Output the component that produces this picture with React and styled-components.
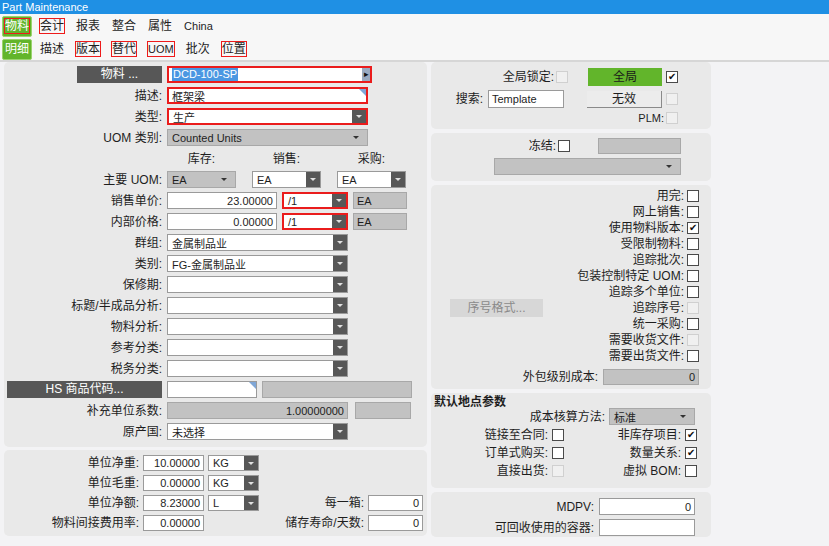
import React from "react";
import styled, { createGlobalStyle } from "styled-components";

const FONT = `"Liberation Sans", "Noto Sans CJK SC", sans-serif`;

const GlobalStyle = createGlobalStyle`
  * { box-sizing: border-box; }
  html, body { margin: 0; padding: 0; background: #f3f3f5; }
  body { font-family: ${FONT}; font-size: 12px; color: #1e1e1e; }
`;

function Select({ value, w, red, gray, flat }) {
  return (
    <SelectBox $w={w} $red={red} $gray={gray}>
      <SelectValue>{value}</SelectValue>
      {flat ? <FlatCaret /> : <DropButton><Caret /></DropButton>}
    </SelectBox>
  );
}

function Check({ checked, disabled }) {
  return <CheckBox $disabled={disabled}>{checked ? "✔" : ""}</CheckBox>;
}

function FormRow({ label, children }) {
  return (
    <Row>
      {typeof label === "string" ? <Label>{label}</Label> : label}
      <Fields>{children}</Fields>
    </Row>
  );
}

const checkList = [
  ["用完:", false, false],
  ["网上销售:", false, false],
  ["使用物料版本:", true, false],
  ["受限制物料:", false, false],
  ["追踪批次:", false, false],
  ["包装控制特定 UOM:", false, false],
  ["追踪多个单位:", false, false],
  ["追踪序号:", false, true],
  ["统一采购:", false, false],
  ["需要收货文件:", false, true],
  ["需要出货文件:", false, false],
];

const emptySelects = ["保修期:", "标题/半成品分析:", "物料分析:", "参考分类:", "税务分类:"];

export default function App() {
  return (
    <Window>
      <GlobalStyle />
      <TitleBar>Part Maintenance</TitleBar>
      <TabBar>
        <Tab $active><TabText $marked>物料</TabText></Tab>
        <Tab><TabText $marked>会计</TabText></Tab>
        <Tab><TabText>报表</TabText></Tab>
        <Tab><TabText>整合</TabText></Tab>
        <Tab><TabText>属性</TabText></Tab>
        <Tab><TabText $latin>China</TabText></Tab>
      </TabBar>
      <TabBar $sub>
        <Tab $active><TabText>明细</TabText></Tab>
        <Tab><TabText>描述</TabText></Tab>
        <Tab><TabText $marked>版本</TabText></Tab>
        <Tab><TabText $marked>替代</TabText></Tab>
        <Tab><TabText $marked $latin>UOM</TabText></Tab>
        <Tab><TabText>批次</TabText></Tab>
        <Tab><TabText $marked>位置</TabText></Tab>
      </TabBar>

      <Body>
        <Column $w={423}>
          <MainPanel>
            <FormRow label={<LinkButton $w={85}>物料 ...</LinkButton>}>
              <TextBox $w={205} $red>
                <Selected>DCD-100-SP</Selected>
                <SideArrow>▸</SideArrow>
              </TextBox>
            </FormRow>
            <FormRow label="描述:">
              <TextBox $w={201} $red>框架梁<Corner /></TextBox>
            </FormRow>
            <FormRow label="类型:">
              <Select w={201} red value="生产" />
            </FormRow>
            <FormRow label="UOM 类别:">
              <Select w={201} gray flat value="Counted Units" />
            </FormRow>
            <FormRow label="">
              <UomGrid>
                <ColHead>库存:</ColHead>
                <ColHead>销售:</ColHead>
                <ColHead>采购:</ColHead>
              </UomGrid>
            </FormRow>
            <FormRow label="主要 UOM:">
              <UomGrid>
                <Select w={69} gray flat value="EA" />
                <Select w={69} value="EA" />
                <Select w={69} value="EA" />
              </UomGrid>
            </FormRow>
            <FormRow label="销售单价:">
              <TextBox $w={110} $right>23.00000</TextBox>
              <Select w={66} red value="/1" />
              <TextBox $w={54} $gray>EA</TextBox>
            </FormRow>
            <FormRow label="内部价格:">
              <TextBox $w={110} $right>0.00000</TextBox>
              <Select w={66} red value="/1" />
              <TextBox $w={54} $gray>EA</TextBox>
            </FormRow>
            <FormRow label="群组:">
              <Select w={181} value="金属制品业" />
            </FormRow>
            <FormRow label="类别:">
              <Select w={181} value="FG-金属制品业" />
            </FormRow>
            {emptySelects.map((l) => (
              <FormRow key={l} label={l}>
                <Select w={181} value="" />
              </FormRow>
            ))}
            <FormRow label={<LinkButton $w={155}>HS 商品代码...</LinkButton>}>
              <TextBox $w={90}><Corner /></TextBox>
              <TextBox $w={150} $gray />
            </FormRow>
            <FormRow label="补充单位系数:">
              <TextBox $w={181} $gray $right>1.00000000</TextBox>
              <TextBox $w={56} $gray $ml={2} />
            </FormRow>
            <FormRow label="原产国:">
              <Select w={181} value="未选择" />
            </FormRow>
          </MainPanel>

          <WeightPanel>
            <Label>单位净重:</Label>
            <TextBox $w={61} $right>10.00000</TextBox>
            <Select w={51} value="KG" />
            <span />
            <span />
            <Label>单位毛重:</Label>
            <TextBox $w={61} $right>0.00000</TextBox>
            <Select w={51} value="KG" />
            <span />
            <span />
            <Label>单位净额:</Label>
            <TextBox $w={61} $right>8.23000</TextBox>
            <Select w={51} value="L" />
            <Label>每一箱:</Label>
            <TextBox $w={55} $right>0</TextBox>
            <Label>物料间接费用率:</Label>
            <TextBox $w={61} $right>0.00000</TextBox>
            <span />
            <Label>储存寿命/天数:</Label>
            <TextBox $w={55} $right>0</TextBox>
          </WeightPanel>
        </Column>

        <Column $w={280}>
          <Panel $h={67}>
            <FlagRow $top={6}>
              <Label>全局锁定:</Label>
              <Check disabled />
              <GreenButton>全局</GreenButton>
              <Check checked />
            </FlagRow>
            <FlagRow $top={4}>
              <Label>搜索:</Label>
              <TextBox $w={76} $h={18} $ml={3}>Template</TextBox>
              <PlainButton>无效</PlainButton>
              <Check disabled />
            </FlagRow>
            <FlagRow $top={4} $h={12}>
              <Label $latin>PLM:</Label>
              <Check disabled />
            </FlagRow>
          </Panel>

          <Panel $h={48}>
            <FreezeRow>
              <Label>冻结:</Label>
              <Check />
              <TextBox $w={83} $h={16} $gray $ml={26} />
            </FreezeRow>
            <FreezeRow $top={4}>
              <Select w={187} gray flat value="" />
            </FreezeRow>
          </Panel>

          <Panel $h={204}>
            <CheckGrid>
              <SerialButton>序号格式...</SerialButton>
              {checkList.map(([l, c, d]) => (
                <CheckItem key={l}>
                  <Label>{l}</Label>
                  <Check checked={c} disabled={d} />
                </CheckItem>
              ))}
            </CheckGrid>
            <CostRow>
              <Label>外包级别成本:</Label>
              <TextBox $w={96} $h={16} $gray $right>0</TextBox>
            </CostRow>
          </Panel>

          <Panel $h={95}>
            <SectionTitle>默认地点参数</SectionTitle>
            <MethodRow>
              <Label>成本核算方法:</Label>
              <Select w={86} gray flat value="标准" />
            </MethodRow>
            <SiteGrid>
              <Label>链接至合同:</Label>
              <Check />
              <Label>非库存项目:</Label>
              <Check checked />
              <Label>订单式购买:</Label>
              <Check />
              <Label>数量关系:</Label>
              <Check checked />
              <Label>直接出货:</Label>
              <Check disabled />
              <Label>虚拟 BOM:</Label>
              <Check />
            </SiteGrid>
          </Panel>

          <Panel $h={45}>
            <MdpvRow $top={6}>
              <Label>MDPV:</Label>
              <TextBox $w={96} $right>0</TextBox>
            </MdpvRow>
            <MdpvRow $top={4}>
              <Label>可回收使用的容器:</Label>
              <TextBox $w={96} $h={17} />
            </MdpvRow>
          </Panel>
        </Column>
      </Body>
    </Window>
  );
}

const Window = styled.div`
  width: 829px;
  height: 546px;
  overflow: hidden;
  background: #f3f3f5;
`;

const TitleBar = styled.div`
  height: 14px;
  background: #1f90e4;
  color: #fff;
  font-size: 11px;
  line-height: 14px;
  padding-left: 2px;
`;

const TabBar = styled.div`
  display: flex;
  align-items: center;
  height: 24px;
  padding-left: 2px;
  background: #f7f7f7;
  border-bottom: ${(p) => (p.$sub ? "2px solid #d6d6d6" : "none")};
`;

const Tab = styled.div`
  display: flex;
  align-items: center;
  justify-content: center;
  height: 21px;
  padding: 0 ${(p) => (p.$active ? 1 : 4)}px;
  margin-right: ${(p) => (p.$active ? 2 : 0)}px;
  background: ${(p) => (p.$active ? "#62b52b" : "transparent")};
  border: 1px solid ${(p) => (p.$active ? "#9ad46e" : "transparent")};
  border-radius: 2px;
  color: ${(p) => (p.$active ? "#fff" : "#1e1e1e")};
`;

const TabText = styled.span`
  display: inline-block;
  font-size: ${(p) => (p.$latin ? 11 : 12)}px;
  line-height: 14px;
  border: 1.5px solid ${(p) => (p.$marked ? "#ee1b1b" : "transparent")};
`;

const Body = styled.div`
  display: flex;
  gap: 4px;
  padding: 0 4px;
`;

const Column = styled.div`
  display: flex;
  flex-direction: column;
  gap: 3px;
  width: ${(p) => p.$w}px;
  & + & { gap: 4px; }
`;

const Panel = styled.section`
  background: #e9e9e9;
  border-radius: 5px;
  height: ${(p) => p.$h}px;
  position: relative;
`;

const MainPanel = styled(Panel)`
  display: flex;
  flex-direction: column;
  gap: 4px;
  height: 385px;
  padding: 4px 0 0 3px;
`;

const Row = styled.div`
  display: grid;
  grid-template-columns: 155px 1fr;
  column-gap: 5px;
  height: 17px;
  align-items: center;
`;

const Label = styled.span`
  text-align: right;
  white-space: nowrap;
  font-size: ${(p) => (p.$latin ? 11 : 12)}px;
  line-height: 14px;
  color: #1e1e1e;
`;

const Fields = styled.div`
  display: flex;
  align-items: center;
  gap: 5px;
  height: 17px;
`;

const LinkButton = styled.div`
  justify-self: end;
  width: ${(p) => p.$w}px;
  height: 17px;
  background: #575757;
  color: #fff;
  font-size: 12px;
  line-height: 17px;
  text-align: center;
`;

const TextBox = styled.div`
  position: relative;
  display: flex;
  align-items: center;
  justify-content: ${(p) => (p.$right ? "flex-end" : "flex-start")};
  width: ${(p) => p.$w}px;
  height: ${(p) => p.$h || 17}px;
  margin-left: ${(p) => p.$ml || 0}px;
  padding: 0 3px;
  background: ${(p) => (p.$gray ? "#c2c2c2" : "#fff")};
  border: ${(p) => (p.$red ? "2px solid #ea1c1c" : `1px solid ${p.$gray ? "#a8a8a8" : "#9a9a9a"}`)};
  font-size: 11px;
  white-space: nowrap;
  overflow: hidden;
  color: #1e1e1e;
`;

const Selected = styled.span`
  background: #4a97e2;
  color: #fff;
  line-height: 13px;
  padding: 0 1px;
`;

const SideArrow = styled.span`
  position: absolute;
  right: 0;
  top: 0;
  bottom: 0;
  width: 8px;
  background: #9aaac0;
  color: #111;
  font-size: 9px;
  line-height: 13px;
  text-align: center;
`;

const Corner = styled.span`
  position: absolute;
  right: 0;
  top: 0;
  width: 0;
  height: 0;
  border-top: 7px solid #7fa6d6;
  border-left: 7px solid transparent;
`;

const SelectBox = styled.div`
  display: flex;
  align-items: center;
  width: ${(p) => p.$w}px;
  height: 17px;
  background: ${(p) => (p.$gray ? "#c2c2c2" : "#fff")};
  border: ${(p) => (p.$red ? "2px solid #ea1c1c" : `1px solid ${p.$gray ? "#a8a8a8" : "#9a9a9a"}`)};
`;

const SelectValue = styled.span`
  flex: 1;
  padding-left: 4px;
  font-size: 11px;
  white-space: nowrap;
  overflow: hidden;
`;

const DropButton = styled.span`
  display: flex;
  align-items: center;
  justify-content: center;
  align-self: stretch;
  width: 14px;
  background: #575757;
`;

const Caret = styled.span`
  width: 0;
  height: 0;
  border-left: 3px solid transparent;
  border-right: 3px solid transparent;
  border-top: 3px solid #e0e0e0;
`;

const FlatCaret = styled(Caret)`
  margin-right: 8px;
  border-top-color: #333;
`;

const UomGrid = styled.div`
  display: grid;
  grid-template-columns: 69px 69px 69px;
  column-gap: 16px;
  align-items: center;
`;

const ColHead = styled.span`
  text-align: center;
  font-size: 12px;
  line-height: 14px;
`;

const WeightPanel = styled(Panel)`
  display: grid;
  grid-template-columns: 135px 61px 51px 1fr 55px;
  grid-auto-rows: 16px;
  column-gap: 4px;
  row-gap: 4px;
  align-items: center;
  height: 86px;
  padding: 5px 4px 0 0;
  & > ${SelectBox} { height: 16px; }
  & > ${TextBox} { height: 16px; }
`;

const FlagRow = styled.div`
  display: flex;
  align-items: center;
  justify-content: flex-end;
  gap: 2px;
  height: ${(p) => p.$h || 18}px;
  margin-top: ${(p) => p.$top}px;
  padding-right: 33px;
`;

const CheckBox = styled.span`
  display: inline-flex;
  align-items: center;
  justify-content: center;
  width: 12px;
  height: 12px;
  flex: none;
  background: ${(p) => (p.$disabled ? "#f0f0f0" : "#fff")};
  border: 1px solid ${(p) => (p.$disabled ? "#d0d0d0" : "#4a4a4a")};
  font-size: 10px;
  line-height: 10px;
  color: #111;
`;

const GreenButton = styled.div`
  width: 74px;
  height: 18px;
  margin: 0 2px 0 18px;
  background: #62b52b;
  color: #1a1a1a;
  font-size: 12px;
  line-height: 18px;
  text-align: center;
`;

const PlainButton = styled.div`
  width: 75px;
  height: 17px;
  margin: 0 2px 0 21px;
  background: #ececec;
  border-right: 1px solid #8a8a8a;
  border-bottom: 1px solid #8a8a8a;
  font-size: 12px;
  line-height: 16px;
  text-align: center;
`;

const FreezeRow = styled.div`
  display: flex;
  align-items: center;
  justify-content: flex-end;
  gap: 2px;
  margin-top: ${(p) => p.$top ?? 5}px;
  padding-right: 30px;
`;

const CheckGrid = styled.div`
  display: grid;
  grid-template-columns: 112px 1fr;
  grid-template-rows: repeat(11, 16px);
  padding: 3px 12px 0 0;
`;

const CheckItem = styled.div`
  grid-column: 2;
  display: flex;
  align-items: center;
  justify-content: flex-end;
  gap: 3px;
`;

const SerialButton = styled.div`
  grid-column: 1;
  grid-row: 8;
  align-self: center;
  width: 93px;
  height: 18px;
  margin-left: 19px;
  background: #d7d7d7;
  color: #8a8a8a;
  font-size: 12px;
  line-height: 18px;
  text-align: center;
`;

const CostRow = styled.div`
  display: flex;
  align-items: center;
  justify-content: flex-end;
  gap: 5px;
  margin-top: 5px;
  padding-right: 12px;
`;

const SectionTitle = styled.div`
  padding: 3px 0 0 3px;
  font-size: 12px;
  font-weight: bold;
  line-height: 12px;
`;

const MethodRow = styled.div`
  display: flex;
  align-items: center;
  justify-content: flex-end;
  gap: 4px;
  padding-right: 16px;
`;

const SiteGrid = styled.div`
  display: grid;
  grid-template-columns: 117px 12px 113px 12px;
  grid-auto-rows: 18px;
  column-gap: 4px;
  align-items: center;
  margin-top: 1px;
`;

const MdpvRow = styled.div`
  display: flex;
  align-items: center;
  justify-content: flex-end;
  gap: 5px;
  margin-top: ${(p) => p.$top}px;
  padding-right: 16px;
`;
